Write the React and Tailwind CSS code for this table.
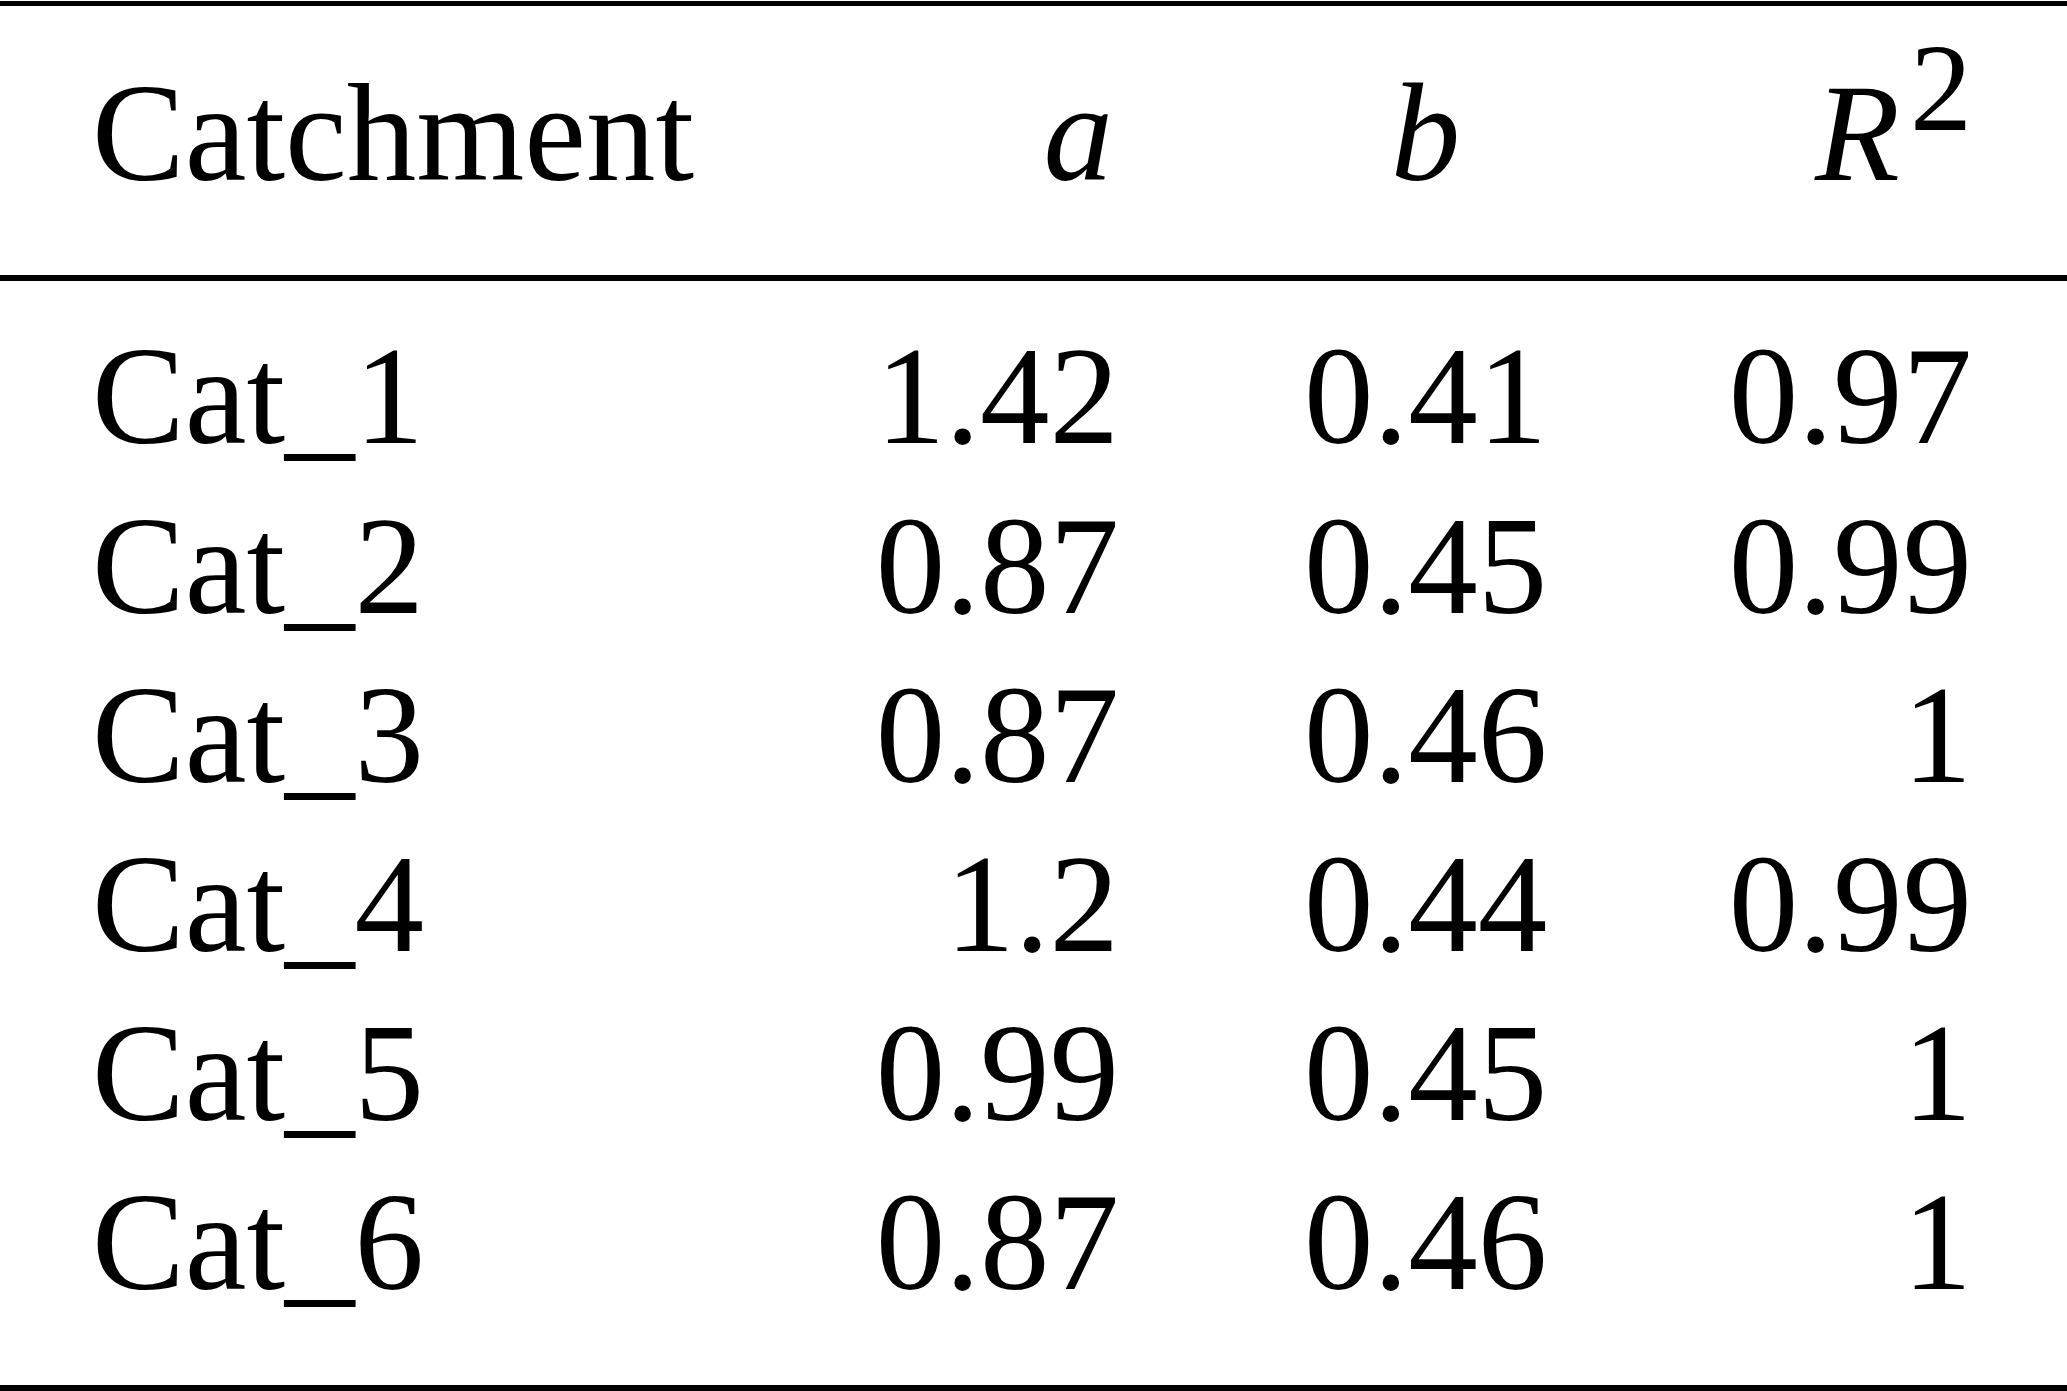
import React from "react";

const rows = [
  ["Cat_1", "1.42", "0.41", "0.97"],
  ["Cat_2", "0.87", "0.45", "0.99"],
  ["Cat_3", "0.87", "0.46", "1"],
  ["Cat_4", "1.2", "0.44", "0.99"],
  ["Cat_5", "0.99", "0.45", "1"],
  ["Cat_6", "0.87", "0.46", "1"],
];

function Row({ children, header }) {
  return (
    <div
      className={
        "grid grid-cols-[708px_319px_428px_425px] pl-[92px] pr-[95px] whitespace-nowrap " +
        (header ? "leading-[139px] h-[139px]" : "leading-[169.2px] h-[169.2px]")
      }
    >
      {children}
    </div>
  );
}

export default function App() {
  return (
    <div
      className="w-[2067px] h-[1391px] bg-white text-black text-[139px] overflow-hidden"
      style={{ fontFamily: '"Liberation Serif", "Times New Roman", serif' }}
    >
      <div className="mt-px h-[5px] bg-black" />
      <div className="pt-[57.6px] pb-[72.4px]">
        <Row header>
          <div className="text-left">Catchment</div>
          <div className="text-right italic pr-[6px]">a</div>
          <div className="flex justify-end">
            <div className="w-[243px] text-center italic">b</div>
          </div>
          <div className="text-right">
            <span className="italic">R</span>
            <span className="relative -top-[50px] ml-[10px] text-[124px]">2</span>
          </div>
        </Row>
      </div>
      <div className="h-[6px] bg-black" />
      <div className="pt-[31.5px]">
        {rows.map((r) => (
          <Row key={r[0]}>
            <div className="text-left">{r[0]}</div>
            <div className="text-right">{r[1]}</div>
            <div className="flex justify-end">
              <div className="w-[243px] text-center">{r[2]}</div>
            </div>
            <div className="text-right">{r[3]}</div>
          </Row>
        ))}
      </div>
      <div className="mt-[57.3px] h-[6px] bg-black" />
    </div>
  );
}
